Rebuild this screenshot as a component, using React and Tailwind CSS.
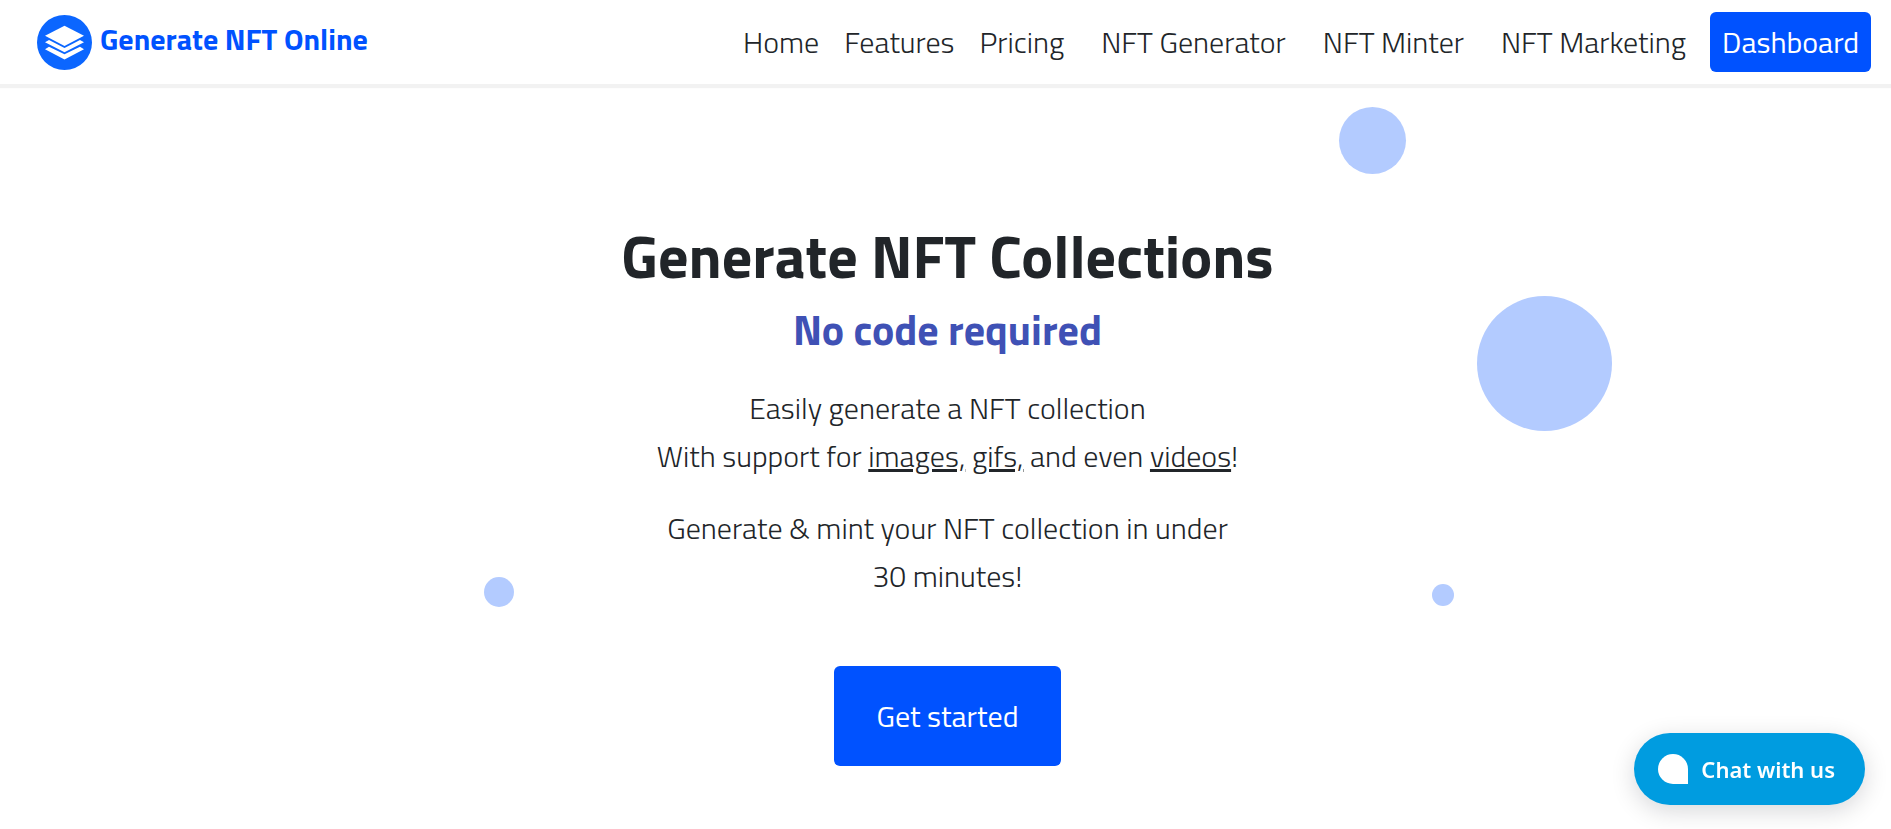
const navLinks = [
  { label: "Home", menu: false },
  { label: "Features", menu: false },
  { label: "Pricing", menu: false },
  { label: "NFT Generator", menu: true },
  { label: "NFT Minter", menu: true },
  { label: "NFT Marketing", menu: true },
];

function LogoMark() {
  return (
    <svg viewBox="0 0 55 55" className="size-[55px] shrink-0" aria-hidden="true">
      <circle cx="27.5" cy="27.5" r="27.5" fill="#0b66ff" />
      <g fill="#fff">
        <path d="M27.5 10.8 47 20.8 27.5 31 8 20.8Z" />
        <path d="M8 27.3 12 25.1 27.5 32.9 43 25.1 47 27.3 27.5 37.2Z" />
        <path d="M8 34.2 12 31.8 27.5 39.2 43 31.8 47 34.2 27.5 44.4Z" />
      </g>
    </svg>
  );
}

function Header() {
  return (
    <header className="relative flex min-h-[84px] flex-wrap items-center justify-between bg-white py-3 pr-5 pl-[37px] shadow-[0_4px_1px_rgba(0,0,0,0.05)]">
      <a href="#home" className="flex items-center gap-2">
        <LogoMark />
        <span className="pb-1.5 text-[30px] leading-9 font-bold text-[#0052ff]">
          Generate NFT Online
        </span>
      </a>
      <nav className="flex flex-wrap items-center">
        <div className="flex flex-wrap items-center gap-px">
          {navLinks.map(({ label, menu }) => (
            <a
              key={label}
              href="#menu"
              className={menu ? "pr-3 pl-6 leading-[60px]" : "px-3 leading-[60px]"}
            >
              {label}
            </a>
          ))}
        </div>
        <a
          href="#dashboard"
          className="ml-3 rounded-md bg-[#0052ff] px-3 leading-[60px] font-normal text-white"
        >
          Dashboard
        </a>
      </nav>
    </header>
  );
}

function Bubbles() {
  return (
    <div className="pointer-events-none absolute inset-0" aria-hidden="true">
      <span className="absolute top-[23px] left-[1339px] size-[67px] rounded-full bg-[#b3cbff]" />
      <span className="absolute top-[212px] left-[1477px] size-[135px] rounded-full bg-[#b3cbff]" />
      <span className="absolute top-[500px] left-[1432px] size-[22px] rounded-full bg-[#b3cbff]" />
      <span className="absolute top-[493px] left-[484px] size-[30px] rounded-full bg-[#b3cbff]" />
    </div>
  );
}

function Hero() {
  return (
    <main className="relative pt-[136px] pb-10 pl-1">
      <Bubbles />
      <section className="relative flex flex-col items-center text-center leading-[48px]">
        <h1 className="text-[60px] leading-[72px] font-bold">Generate NFT Collections</h1>
        <h2 className="mt-2 text-[42px] leading-[58px] font-bold text-[#3f51b5]">
          No code required
        </h2>
        <p className="mt-[26px]">
          Easily generate a NFT collection
          <br />
          With support for <u>images,</u> <u>gifs,</u> and even <u>videos</u>!
        </p>
        <p className="mt-6">
          Generate &amp; mint your NFT collection in under
          <br />
          30 minutes!
        </p>
        <button
          type="button"
          className="mt-[66px] h-[100px] rounded-md bg-[#0052ff] px-[42px] font-normal text-white"
        >
          Get started
        </button>
      </section>
    </main>
  );
}

function ChatButton() {
  return (
    <button
      type="button"
      className="fixed right-[26px] bottom-6 flex h-[72px] items-center gap-[13px] rounded-full bg-[#009ce0] pr-[30px] pl-6 font-['Noto_Sans',sans-serif] text-[22px] font-semibold text-white shadow-[0_6px_24px_rgba(8,15,26,0.16)]"
    >
      <span className="size-[30px] rounded-full rounded-br-none bg-white" />
      Chat with us
    </button>
  );
}

export default function App() {
  return (
    <div className="min-h-screen bg-white font-['Titillium_Web',Roboto,sans-serif] text-[30px] font-light text-[#212529]">
      <Header />
      <Hero />
      <ChatButton />
    </div>
  );
}
